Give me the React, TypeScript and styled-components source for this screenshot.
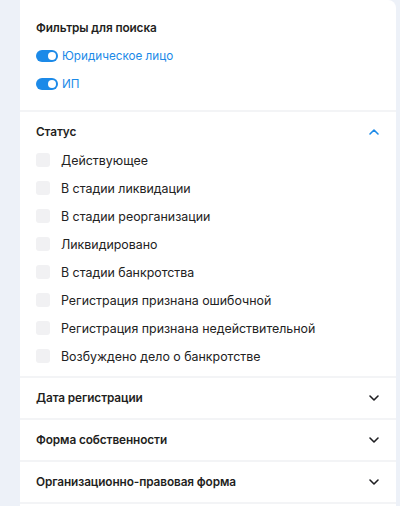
import React from "react";
import styled, { createGlobalStyle } from "styled-components";

const Global = createGlobalStyle`
  html, body { margin: 0; padding: 0; background: #edf1f8; }
  body { font-family: Inter, "Noto Sans", sans-serif; color: #1f1f22; }
  * { box-sizing: border-box; }
`;

const Page = styled.div`
  width: 400px;
  height: 506px;
  padding: 0 4px 0 20px;
  overflow: hidden;
`;

const Card = styled.div`
  background: #ffffff;
  border-radius: 0 8px 0 0;
  height: 100%;
`;

const Section = styled.div<{ $pad?: string }>`
  padding: ${(p) => p.$pad || "0 16px"};
  border-bottom: 2px solid #f3f4f6;
`;

const Title = styled.div`
  font-size: 11.8px;
  font-weight: 600;
  line-height: 16px;
  letter-spacing: -0.1px;
`;

const ToggleRow = styled.label`
  display: flex;
  align-items: center;
  gap: 4px;
  height: 16px;
  margin-top: 12px;
  color: #1c8ae8;
  font-size: 11.7px;
`;

const Toggle = styled.span`
  position: relative;
  width: 22px;
  height: 12px;
  border-radius: 6px;
  background: #1c8ae8;
  flex: none;
  &::after {
    content: "";
    position: absolute;
    right: 2px;
    top: 2px;
    width: 8px;
    height: 8px;
    border-radius: 50%;
    background: #fff;
  }
`;

const Header = styled.div`
  display: flex;
  align-items: center;
  justify-content: space-between;
  height: 40px;
`;

const List = styled.div`
  display: flex;
  flex-direction: column;
  gap: 12px;
  padding: 0 0 12px;
`;

const CheckRow = styled.label`
  display: flex;
  align-items: center;
  gap: 11px;
  height: 16px;
  font-size: 12.4px;
  color: #222;
`;

const Box = styled.span`
  width: 14px;
  height: 14px;
  border-radius: 3px;
  background: #f1f1f3;
  flex: none;
`;

const Chevron = ({ up }: { up?: boolean }) => (
  <svg width="12" height="8" viewBox="0 0 12 8">
    <path
      d={up ? "M2 6 L6 2 L10 6" : "M2 2 L6 6 L10 2"}
      fill="none"
      stroke={up ? "#1c8ae8" : "#1f1f22"}
      strokeWidth="1.6"
      strokeLinecap="round"
      strokeLinejoin="round"
    />
  </svg>
);

const statuses = [
  "Действующее",
  "В стадии ликвидации",
  "В стадии реорганизации",
  "Ликвидировано",
  "В стадии банкротства",
  "Регистрация признана ошибочной",
  "Регистрация признана недействительной",
  "Возбуждено дело о банкротстве",
];

const collapsed = ["Дата регистрации", "Форма собственности", "Организационно-правовая форма"];

export default function App() {
  return (
    <Page>
      <Global />
      <Card>
        <Section $pad="20px 16px 18px">
          <Title>Фильтры для поиска</Title>
          <ToggleRow>
            <Toggle />
            Юридическое лицо
          </ToggleRow>
          <ToggleRow>
            <Toggle />
            ИП
          </ToggleRow>
        </Section>
        <Section>
          <Header>
            <Title>Статус</Title>
            <Chevron up />
          </Header>
          <List>
            {statuses.map((s) => (
              <CheckRow key={s}>
                <Box />
                {s}
              </CheckRow>
            ))}
          </List>
        </Section>
        {collapsed.map((c) => (
          <Section key={c}>
            <Header>
              <Title>{c}</Title>
              <Chevron />
            </Header>
          </Section>
        ))}
      </Card>
    </Page>
  );
}
